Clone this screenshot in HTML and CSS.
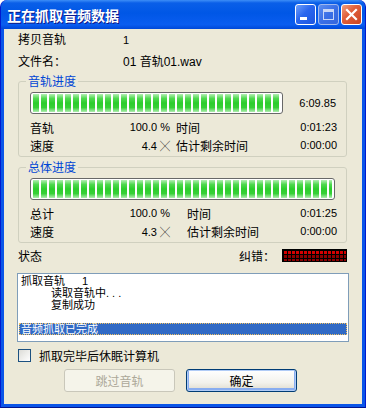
FILE: index.html
```html
<!DOCTYPE html>
<html lang="zh-CN">
<head>
    <meta charset="UTF-8">
    <meta name="viewport" content="width=device-width, initial-scale=1.0">
    <title>正在抓取音频数据</title>
    <link rel="stylesheet" href="styles.css">
</head>
<body>
    <div class="window">
        <div class="titlebar">
            <span class="title">正在抓取音频数据</span>
            <div class="title-buttons">
                <span class="tbtn min">
                    <svg width="19" height="19" viewBox="0 0 19 19"><rect x="4" y="12" width="7" height="3" fill="#fff"/></svg>
                </span>
                <span class="tbtn max">
                    <svg width="19" height="19" viewBox="0 0 19 19"><rect x="4.5" y="4.5" width="10" height="10" fill="none" stroke="#c8d6f6" stroke-width="1"/><rect x="4" y="4" width="11" height="3" fill="#c8d6f6"/></svg>
                </span>
                <span class="tbtn close">
                    <svg width="19" height="19" viewBox="0 0 19 19"><path d="M5 5 L14 14 M14 5 L5 14" stroke="#fff" stroke-width="2.2" stroke-linecap="square"/></svg>
                </span>
            </div>
        </div>

        <div class="content">
            <div class="info-row"><span class="info-label">拷贝音轨</span><span class="num">1</span></div>
            <div class="info-row"><span class="info-label">文件名：</span><span>01 音轨01.wav</span></div>

            <fieldset class="group">
                <legend>音轨进度</legend>
                <div class="bar-row">
                    <div class="progress short"><div class="fill"></div></div>
                    <span class="num total-time">6:09.85</span>
                </div>
                <div class="stats">
                    <span>音轨</span><span class="num val">100.0 %</span><span class="label2">时间</span><span class="num val">0:01:23</span>
                    <span>速度</span><span class="num val">4.4 <span class="times">╳</span></span><span class="label2">估计剩余时间</span><span class="num val">0:00:00</span>
                </div>
            </fieldset>

            <fieldset class="group second">
                <legend>总体进度</legend>
                <div class="bar-row">
                    <div class="progress full"><div class="fill"></div></div>
                </div>
                <div class="stats wide">
                    <span>总计</span><span class="num val">100.0 %</span><span class="label2">时间</span><span class="num val">0:01:25</span>
                    <span>速度</span><span class="num val">4.3 <span class="times">╳</span></span><span class="label2">估计剩余时间</span><span class="num val">0:00:00</span>
                </div>
            </fieldset>

            <div class="status-row">
                <span>状态</span>
                <span class="err-label">纠错：</span>
                <div class="led"></div>
            </div>

            <div class="listbox">
                <div class="item">抓取音轨<span class="tab">1</span></div>
                <div class="item sub">读取音轨中. . .</div>
                <div class="item sub">复制成功</div>
                <div class="item"></div>
                <div class="item selected">音频抓取已完成</div>
            </div>

            <label class="check-row">
                <span class="checkbox"></span>
                <span>抓取完毕后休眠计算机</span>
            </label>

            <div class="buttons">
                <button class="btn" disabled>跳过音轨</button>
                <button class="btn default">确定</button>
            </div>
        </div>
    </div>
</body>
</html>
```

FILE: styles.css
```css
html, body {
    margin: 0;
    padding: 0;
    background: #fff;
}
body {
    font-family: "Liberation Sans", "Noto Sans CJK SC", sans-serif;
    font-size: 12px;
    color: #000;
}
.window {
    width: 366px;
    height: 408px;
    box-sizing: border-box;
    background: #0a55e8;
    border: 1px solid #0019cf;
    border-top: none;
    border-bottom-color: #00138c;
    border-radius: 7px 7px 0 0;
    display: flex;
    flex-direction: column;
    overflow: hidden;
}

/* title bar */
.titlebar {
    height: 29px;
    flex: 0 0 29px;
    display: flex;
    align-items: center;
    justify-content: space-between;
    padding: 0 3px 0 6px;
    background: linear-gradient(to bottom, #3d8ef7 0, #0a5fe8 3px, #0057e6 45%, #0a5df0 85%, #0048d8 100%);
    border-radius: 7px 7px 0 0;
}
.title {
    color: #fff;
    font-family: "Noto Sans CJK SC", sans-serif;
    font-weight: bold;
    font-size: 14px;
    text-shadow: 1px 1px #0f1a8a;
}
.title-buttons {
    display: flex;
    gap: 2px;
}
.tbtn {
    width: 21px;
    height: 21px;
    box-sizing: border-box;
    border: 1px solid #fff;
    border-radius: 3px;
    display: block;
}
.tbtn svg {
    display: block;
}
.tbtn.min {
    background: linear-gradient(135deg, #6fa0fa 0%, #2a66ee 45%, #1c55e0 100%);
}
.tbtn.max {
    border-color: #9fb8ee;
    background: linear-gradient(135deg, #5d8ef0 0%, #3a6fe6 50%, #3566dd 100%);
}
.tbtn.close {
    background: linear-gradient(135deg, #f0a080 0%, #e0603c 40%, #cc4522 100%);
}

/* body */
.content {
    flex: 1;
    margin: 0 3px 3px;
    background: #ece9d8;
    padding: 0 15px 0 14px;
}
.info-row {
    height: 22px;
    line-height: 22px;
    display: flex;
}
.info-label {
    width: 105px;
}
.num {
    font-size: 11px;
}
.times {
    font-family: "Noto Sans CJK SC", sans-serif;
    font-size: 10px;
}

.group {
    margin: 1px 0 0;
    padding: 0 9px 2px 11px;
    border: 1px solid #d0d0bf;
    border-radius: 3px;
}
.group.second {
    margin-top: 3px;
}
.group legend {
    color: #0046d5;
    padding: 0 2px;
    margin-left: -4px;
    line-height: 14px;
    font-family: "Noto Sans CJK SC", sans-serif;
}
.bar-row {
    display: flex;
    align-items: center;
    margin: 4px 0;
}
.progress {
    height: 22px;
    box-sizing: border-box;
    border: 1px solid #686868;
    border-radius: 3px;
    background: #fff;
    padding: 1px 2px;
}
.progress.short {
    width: 253px;
}
.progress.full {
    flex: 1;
    margin-right: 2px;
}
.fill {
    height: 100%;
    background:
        repeating-linear-gradient(to right, transparent 0 6px, #fff 6px 8px),
        linear-gradient(to bottom, #b4efb4 0%, #4fd84f 25%, #2ccd2c 50%, #37d037 75%, #b0edb0 100%);
}
.total-time {
    margin-left: auto;
    margin-right: 1px;
}
.stats {
    display: grid;
    grid-template-columns: 50px 90px 1fr auto;
    grid-auto-rows: 18px;
    align-items: center;
}
.stats .val {
    text-align: right;
}
.stats .label2 {
    padding-left: 6px;
}
.stats.wide .label2 {
    padding-left: 17px;
}

.status-row {
    margin-top: 3px;
    height: 18px;
    display: flex;
    align-items: center;
}
.err-label {
    margin-left: auto;
    margin-right: 7px;
}
.led {
    width: 65px;
    height: 13px;
    box-sizing: border-box;
    border: 1px solid #000;
    background-color: #000;
    background-image:
        linear-gradient(to right, transparent 3px, #000 3px),
        linear-gradient(to bottom, transparent 3px, #000 3px),
        linear-gradient(to bottom, #d40000 0 4px, #8a0000 4px);
    background-size: 4px 4px, 4px 4px, 100% 100%;
    background-position: 1px 1px, 1px 1px, 0 0;
}

.listbox {
    margin: 9px -2px 0 -1px;
    height: 69px;
    box-sizing: border-box;
    border: 1px solid #7f9db9;
    background: #fff;
    padding: 1px;
}
.item {
    height: 12px;
    line-height: 12px;
    padding-left: 2px;
    font-size: 11px;
    white-space: pre;
}
.item.sub {
    padding-left: 32px;
}
.item .tab {
    margin-left: 17px;
}
.item.selected {
    background: #316ac5;
    color: #fff;
    outline: 1px dotted #f0c060;
    outline-offset: -1px;
}

.check-row {
    margin-top: 4px;
    height: 18px;
    display: flex;
    align-items: center;
    gap: 8px;
}
.checkbox {
    width: 13px;
    height: 13px;
    box-sizing: border-box;
    border: 1px solid #1c5180;
    background: linear-gradient(135deg, #dcdcd7 0%, #fff 100%);
}

.buttons {
    margin: 5px 0 0 46px;
    display: flex;
    gap: 11px;
}
.btn {
    width: 111px;
    height: 23px;
    border: 1px solid #003c74;
    border-radius: 3px;
    background: linear-gradient(to bottom, #fff 0%, #f3f2ec 60%, #e3e0d4 90%, #d6d0c5 100%);
    font-family: "Noto Sans CJK SC", sans-serif;
    font-size: 12px;
    color: #000;
    padding: 0;
}
.btn.default {
    box-shadow: inset 0 0 0 1px #b0cbf6, inset 0 -1px 0 2px #89adf0;
}
.btn:disabled {
    border-color: #c9c7ba;
    background: #f5f4ea;
    color: #aca899;
}
```
